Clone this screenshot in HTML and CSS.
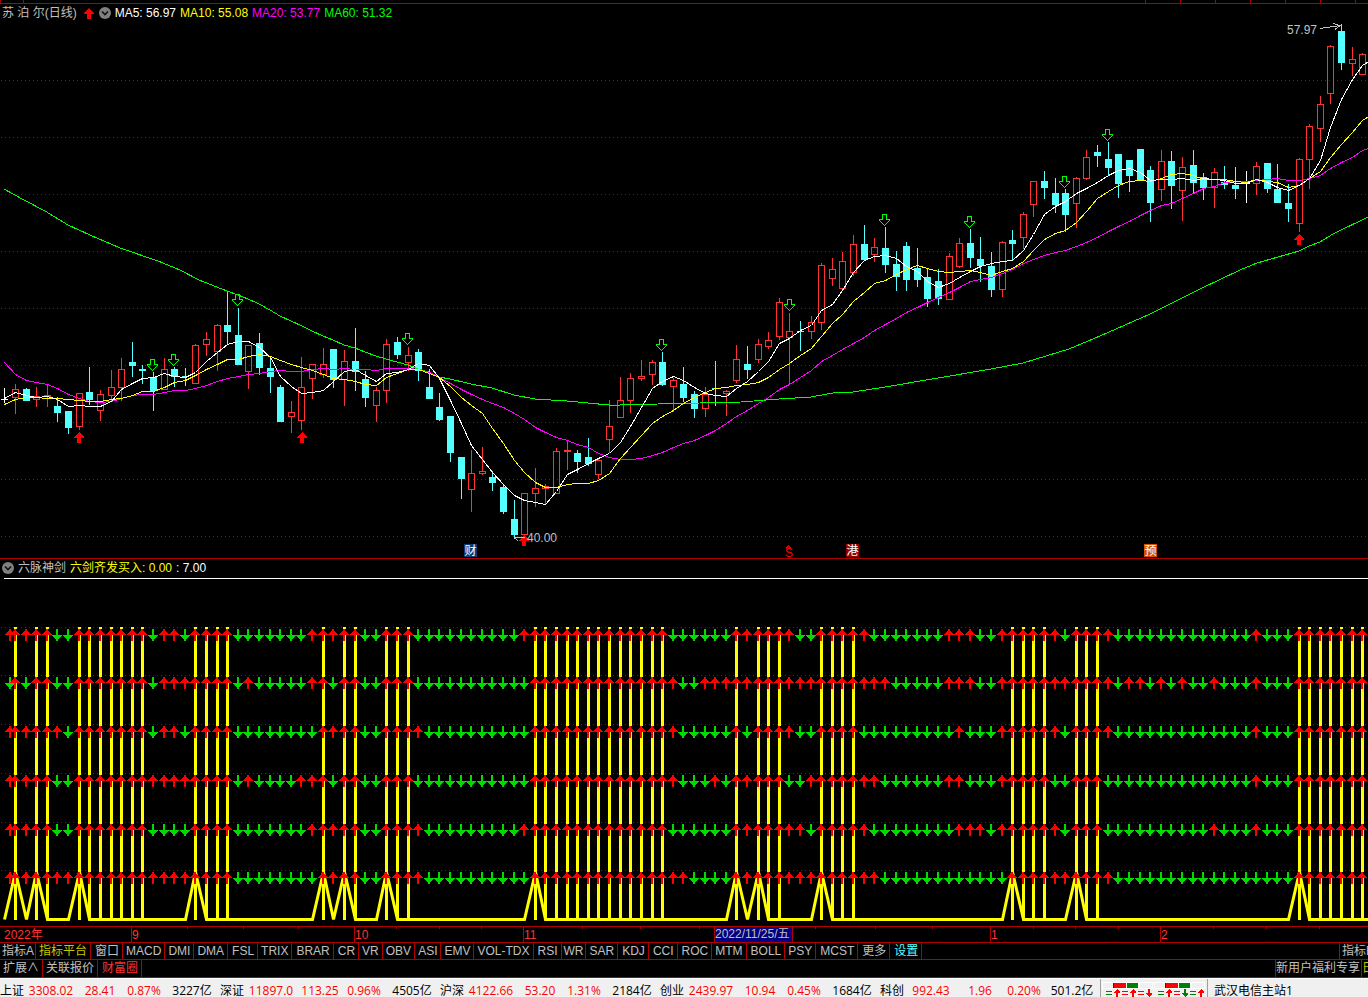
FILE: index.html
```html
<!DOCTYPE html>
<html lang="zh-CN">
<head>
<meta charset="utf-8">
<meta name="viewport" content="width=device-width, initial-scale=1">
<title>苏泊尔(日线)</title>
<link rel="stylesheet" href="styles.css">
</head>
<body>
<div class="terminal">
  <svg class="plot" id="strip" viewBox="0 0 1368 4" aria-hidden="true"></svg>

  <section class="panel">
    <header class="legend">
      <span class="name">苏 泊 尔(日线)</span>
      <svg class="trend" viewBox="0 0 10 11" width="10" height="11" aria-hidden="true"><path d="M5 0L10 5V6H7V11H3V6H0V5Z" fill="#f00"/></svg>
      <button class="fold" type="button" aria-label="展开主图"><svg viewBox="0 0 12 12" width="12" height="12"><circle cx="6" cy="6" r="6" fill="#808080"/><path d="M3 4.5L6 7.5L9 4.5" fill="none" stroke="#111" stroke-width="1.6"/></svg></button>
      <span class="white">MA5: 56.97</span>
      <span class="yellow">MA10: 55.08</span>
      <span class="magenta">MA20: 53.77</span>
      <span class="green">MA60: 51.32</span>
    </header>
    <svg class="plot" id="price" viewBox="0 22 1368 536" role="img" aria-label="日线K线图"></svg>
  </section>

  <section class="panel divided">
    <header class="legend">
      <button class="fold" type="button" aria-label="展开副图"><svg viewBox="0 0 12 12" width="12" height="12"><circle cx="6" cy="6" r="6" fill="#808080"/><path d="M3 4.5L6 7.5L9 4.5" fill="none" stroke="#111" stroke-width="1.6"/></svg></button>
      <span class="name">六脉神剑</span>
      <span class="yellow">六剑齐发买入: 0.00</span>
      <span class="white">: 7.00</span>
    </header>
    <svg class="plot" id="swords" viewBox="0 577 1368 349" role="img" aria-label="六脉神剑指标"></svg>
  </section>

  <svg class="plot" id="axis" viewBox="0 926 1368 16" role="img" aria-label="日期轴"></svg>

  <nav class="tabs" aria-label="指标">
    <button type="button" class="tight">指标A</button><button type="button" class="olive">指标平台</button><button type="button" class="roomy">窗口</button><button type="button">MACD</button><button type="button">DMI</button><button type="button">DMA</button><button type="button" class="roomy">FSL</button><button type="button">TRIX</button><button type="button" class="roomy">BRAR</button><button type="button" class="roomy">CR</button><button type="button">VR</button><button type="button">OBV</button><button type="button">ASI</button><button type="button">EMV</button><button type="button">VOL-TDX</button><button type="button" class="roomy">RSI</button><button type="button" class="tight">WR</button><button type="button" class="roomy">SAR</button><button type="button" class="roomy">KDJ</button><button type="button" class="roomy">CCI</button><button type="button" class="roomy">ROC</button><button type="button">MTM</button><button type="button" class="roomy">BOLL</button><button type="button">PSY</button><button type="button" class="roomy">MCST</button><button type="button" class="roomy">更多</button><button type="button" class="roomy aqua">设置</button>
    <div class="tail tail-indicator"><button type="button" class="tight">指标B</button></div>
  </nav>

  <nav class="tabs lower" aria-label="扩展">
    <button type="button">扩展∧</button><button type="button">关联报价</button><button type="button" class="roomy red">财富圈</button>
    <div class="tail tail-promo"><button type="button" class="snug">新用户福利专享</button><button type="button" class="snug olive">日</button></div>
  </nav>

  <footer class="status">
    <div class="quote"><b>上证</b><i>3308.02</i><i>28.41</i><i>0.87%</i><span>3227亿</span></div>
    <div class="quote"><b>深证</b><i>11897.0</i><i>113.25</i><i>0.96%</i><span>4505亿</span></div>
    <div class="quote"><b>沪深</b><i>4122.66</i><i>53.20</i><i>1.31%</i><span>2184亿</span></div>
    <div class="quote"><b>创业</b><i>2439.97</i><i>10.94</i><i>0.45%</i><span>1684亿</span></div>
    <div class="quote"><b>科创</b><i>992.43</i><i>1.96</i><i>0.20%</i><span>501.2亿</span></div>
    <div class="meters"><svg id="meters" viewBox="0 0 106 19" width="106" height="19" aria-hidden="true"></svg></div>
    <div class="host">武汉电信主站1</div>
  </footer>
</div>
<script src="chart.js"></script>
</body>
</html>
```
FILE: styles.css
```css
* { box-sizing: border-box; }
html, body { margin: 0; background: #000; }
body {
  overflow: hidden;
  font: 12px/16px "Liberation Sans", "Noto Sans CJK SC", sans-serif;
  color: #c0c0c0;
}
button { font: inherit; color: inherit; background: none; border: 0; padding: 0; margin: 0; cursor: pointer; }
.terminal { display: flex; flex-direction: column; min-height: 100vh; }
.panel { display: flex; flex-direction: column; }
.divided { border-top: 1px solid #b00000; }
.legend { display: flex; align-items: center; gap: 4px; height: 18px; padding-left: 2px; white-space: nowrap; }
.legend .trend { margin: 0 1px 0 3px; display: block; }
.legend .fold { display: block; width: 12px; height: 12px; }
.fold svg { display: block; }
.white { color: #fff; }
.yellow { color: #ff0; }
.magenta { color: #f0f; }
.green { color: #0f0; }
.plot { display: block; width: 100%; height: auto; overflow: visible; }
.plot text { font-family: "Liberation Sans", "Noto Sans CJK SC", sans-serif; font-size: 12px; }
.crisp { shape-rendering: crispEdges; }

.tabs { display: flex; height: 17px; border-top: 1px solid #b00000; overflow: hidden; white-space: nowrap; }
.tabs.lower { height: 19px; border-bottom: 1px solid #b00000; }
.tabs button { flex: none; height: 16px; line-height: 16px; padding: 0 3px; border-right: 1px solid #b00000; }
.tabs.lower button { height: 17px; line-height: 17px; }
.tabs .roomy { padding: 0 3px 0 4px; }
.tabs .tight { padding: 0 1px 0 2px; }
.tabs .snug { padding: 0 1px 0 0; }
.tabs .olive { color: #c8c800; }
.tabs .aqua { color: #54ffff; }
.tabs .red { color: #ff3232; }
.tail { display: flex; margin-left: auto; border-left: 1px solid #b00000; overflow: hidden; flex: none; }
.tail-indicator { width: 29px; }
.tail-promo { width: 93px; }

.status {
  display: flex; flex: 1; min-height: 19px; padding-top: 4px; overflow: hidden; white-space: nowrap;
  background: #f0f0f0; color: #000; border-top: 1px solid #fff;
  font-family: "Open Sans", "Noto Sans CJK SC", sans-serif; line-height: 15px;
}
.quote { flex: none; display: grid; grid-template-columns: 26px 50px 48px 40px 56px; text-align: center; }
.quote b { font-weight: normal; text-align: left; }
.quote i { font-style: normal; color: #f00; }
.meters { flex: none; margin: -4px 0; border-left: 1px solid #a0a0a0; border-right: 1px solid #a0a0a0; width: 108px; }
.meters svg { display: block; }
.host { padding-left: 6px; }
```
FILE: chart.js
```js
const RED = '#ff3232', CYAN = '#54ffff', LINE = '#b00000';
const px = i => Math.round(4.45 + 10.608 * i);
const rect = (x, y, w, h, f) => `<rect x="${x}" y="${y}" width="${w}" height="${h}" fill="${f}"/>`;
const dots = (y, c) => `<path d="M1 ${y}.5H1368" stroke="${c}" stroke-dasharray="1 3"/>`;

// colour, high, body top, body bottom, low
const candles = `w388 399 400 403,r384 389 398 414,c388 389 401 401,r387 396 400 407,r385 395 397 407,c397 406 413 422,c411 411 428 434,r393 393 427 430,c367 392 400 405,r390 394 411 421,
r370 387 396 401,r358 369 388 401,c342 362 366 377,c365 369 371 384,c372 377 391 411,r358 369 390 390,c367 369 377 387,c368 376 377 386,r344 345 384 384,r332 339 345 356,
r324 325 352 371,c291 325 332 344,c308 335 365 365,r345 345 372 389,c333 343 368 375,c356 368 377 393,c385 387 422 422,r401 412 417 433,r357 387 421 430,r364 364 379 399,
r348 364 375 378,c349 349 380 388,r350 361 380 406,c328 361 372 391,c371 379 398 407,r387 390 406 422,r339 344 391 403,c337 342 355 359,r347 355 363 371,c349 352 371 381,
c369 387 399 399,c393 407 420 421,c416 416 453 462,c457 457 479 499,r450 473 490 512,r447 471 474 475,c471 477 483 491,c484 487 512 514,c500 519 535 537,r493 493 535 535,
r468 488 494 507,r484 486 489 505,r448 451 494 494,r441 450 452 470,c450 453 462 473,c438 457 464 466,r458 460 475 479,r400 426 440 453,r377 400 418 418,r373 378 401 413,
r360 376 379 381,r360 362 375 385,c352 362 385 386,r378 380 387 412,c367 384 398 402,c391 394 409 418,r387 394 409 417,c361 388 389 406,r390 391 394 416,r345 359 381 383,
c346 364 370 379,r339 344 360 363,r332 340 347 349,r298 302 337 340,r313 331 338 384,c321 331 332 351,r316 322 332 339,r263 265 323 330,r258 269 279 286,r252 261 289 289,
r235 244 273 276,c225 244 260 261,r238 247 255 262,c227 248 265 273,c251 264 277 291,c242 246 280 291,c248 268 280 287,c269 277 299 307,c269 281 299 305,r253 256 300 300,
r238 243 267 268,c229 243 258 268,c237 259 266 282,c252 266 290 297,r241 242 290 297,c230 240 244 261,r212 214 238 249,r181 181 205 217,c171 181 188 199,c178 193 205 213,
c189 193 215 232,r177 178 204 228,r150 157 179 180,c145 152 156 167,c142 159 168 175,c154 154 184 198,c160 160 176 192,c149 149 180 180,c166 170 203 222,r150 161 190 201,
c151 161 186 209,r157 167 191 221,c150 165 183 193,c173 177 188 200,r168 172 188 208,c166 182 185 189,c167 185 189 199,w171 183 184 203,r162 166 184 195,c163 163 189 193,
c164 189 203 203,c184 203 209 222,r158 159 224 232,r124 126 160 189,r96 104 129 142,r45 46 94 104,c24 31 63 70,r47 59 64 76,r53 54 75 75`
  .replace(/\n/g, '').split(',').map(s => [s[0], ...s.slice(1).split(' ').map(Number)]);

const ma5 = [398,392,395,397,396,399,406,405,406,406,401,389,383,378,377,373,376,377,372,361,352,344,341,341,347,357,376,386,393,392,390,381,371,369,375,381,373,372,369,363,365,378,400,423,445,459,472,484,495,500,502,504,491,474,469,463,458,453,442,426,407,388,381,376,380,387,393,395,396,388,381,371,361,343,338,330,325,310,304,290,272,260,256,255,258,266,271,281,287,283,277,271,266,263,261,260,250,234,214,206,201,193,188,182,175,170,168,172,180,179,179,178,180,178,179,180,183,183,179,182,187,190,185,178,160,127,99,79,65,58];
const ma10 = [404,399,397,397,398,398,399,400,401,401,399,398,395,391,391,387,382,380,375,369,364,359,359,356,354,356,360,364,367,370,374,378,379,381,384,385,377,373,369,369,373,377,386,397,405,413,428,443,460,472,482,487,487,484,483,483,480,473,458,447,435,423,416,410,403,397,392,388,387,385,384,382,377,369,363,355,348,336,323,314,301,292,283,280,274,269,265,268,271,272,271,270,272,275,271,268,261,250,239,233,230,222,211,198,191,185,181,180,181,178,174,173,175,179,179,179,181,182,179,181,182,187,185,178,171,157,144,132,120,113];
const ma20 = [362,374,380,382,384,388,394,398,401,402,401,398,395,394,394,392,390,390,388,385,381,378,376,374,373,371,370,371,371,369,368,369,368,369,369,370,368,368,368,369,372,377,383,389,394,399,403,407,413,419,427,432,437,440,444,447,453,457,459,459,458,455,452,447,443,440,435,430,423,416,410,403,397,389,384,377,370,361,355,349,343,337,330,324,318,312,307,302,297,292,287,281,279,277,273,269,263,259,255,252,250,246,242,237,231,226,221,215,210,205,203,198,193,188,186,182,181,181,180,179,178,180,180,178,175,168,162,157,150,146];
const ma60 = '4,189 24,200 45,211 68,225 90,235 120,248 158,261 180,270 199,280 227,291 238,295 248,299 259,304 270,310 280,316 291,321 302,326 312,331 323,336 333,340 344,345 355,348 365,352 376,356 386,359 397,362 408,365 418,369 429,372 439,377 450,379 471,384 492,388 514,395 535,399 567,401 609,405 620,405 658,404 700,403 741,402 779,399 811,397 833,393 853,392 885,387 938,378 991,369 1023,363 1069,349 1100,336 1150,314 1200,289 1240,270 1257,263 1299,251 1309,246 1320,242 1333,234 1368,217';

const curve = (pts, c) => `<polyline points="${pts}" fill="none" stroke="${c}"/>`;
const series = v => v.map((y, i) => `${px(i) + .5},${y + .5}`).join(' ');
const sellMark = ([x, y]) => `<path d="M${x - 2.5} ${y + .5}h4v5h3v1l-5 5l-5 -5v-1h3v-5Z" fill="none" stroke="#0f0"/>`;
const buyMark = ([x, y]) => `<path d="M${x} ${y}l5 5v1h-3v5h-4v-5h-3v-1Z" fill="#f00"/>`;
const badge = (x, t, bg) => rect(x, 544, 13, 13, bg) + `<text x="${x + .5}" y="555" fill="#fff">${t}</text>`;

let g = '<g class="crisp">';
[80, 137, 194, 251, 308, 365, 422, 479, 536].forEach(y => g += dots(y, LINE));
candles.forEach(([k, hi, top, bot, lo], i) => {
  const x = px(i), h = bot - top;
  if (k === 'r') {
    g += rect(x, hi, 1, top - hi, RED) + rect(x, bot, 1, lo - bot, RED);
    g += `<rect x="${x - 2.5}" y="${top + .5}" width="6" height="${h - 1}" fill="none" stroke="${RED}"/>`;
  } else {
    const c = k === 'c' ? CYAN : '#fff';
    g += rect(x, hi, 1, lo - hi, c) + rect(x - 3, top, 7, h, c);
  }
});
g += curve(ma60, '#0f0') + curve(series(ma20), '#f0f') + curve(series(ma10), '#ff0') + curve(series(ma5), '#fff');
g += [[153, 359], [174, 354], [238, 294], [408, 333], [662, 339], [790, 299], [885, 214], [970, 216], [1065, 176], [1108, 129]].map(sellMark).join('');
g += [[79, 432], [302, 432], [524, 535], [1299, 234]].map(buyMark).join('');
g += '<path d="M1320 28.5L1340 25.5M1333 23.5L1340 25.5L1335 29.5M514 537.5H525M514 537.5L518 541" fill="none" stroke="#c0c0c0"/></g>';
g += '<text x="1287" y="34" fill="#c0c0c0">57.97</text><text x="527" y="542" fill="#c0c0c0">40.00</text>';
g += badge(464, '财', '#0a3a78') + badge(846, '港', '#900000') + badge(1144, '预', '#d05000');
g += '<text x="785" y="557" fill="#f00">S</text><path d="M786 548.5L788.5 546L791 548.5" fill="none" stroke="#f00" stroke-width="1.5"/>';
document.getElementById('price').innerHTML = g;

// bars falling on each of the six signal rows
const falls = [
  '5-6 14 17 22-28 34-35 39-48 63-68 75-76 82-88 92-93 100 105-117 119-121',
  '0 2 5-6 14 22 24-28 31 34-35 39-49 64-65 84-88 92-93 105 108 110 112-113 115-117 119-121',
  '6 14 17 22-29 34-35 40-49 64-68 70 75-76 81-89 91-93 100 105-117 119-121',
  '5-6 22 24-27 31 34-35 39-49 64-66 68 74-75 83-88 91-93 99-100 104-117 119-121',
  '5-6 14-17 22-28 34-35 40-48 63-68 76 82-89 93 100 104-113 115-117 119-121',
  '22-29 34-35 40-49 65-68 83-94 105-121'
];
const span = s => s.split(' ').flatMap(p => {
  const [a, b = a] = p.split('-').map(Number);
  return Array.from({ length: b - a + 1 }, (_, k) => a + k);
});
const hits = span('1 3-4 7-13 18-21 30 32-33 36-38 50-62 69 71-73 77-80 95-98 101-103 122-128');
const levels = [627, 675, 724, 773, 822, 870];

let s = '<g class="crisp"><path d="M4 578.5H1368" stroke="#fff"/>';
levels.forEach(y => s += dots(y, LINE));
hits.forEach(i => {
  s += rect(px(i) - 1, 627, 3, 293, '#ff0');
  levels.forEach(y => s += rect(px(i) - 1, y + 2, 3, 6, '#000'));
});
s += '</g><polyline fill="none" stroke="#ff0" stroke-width="3" points="';
for (let i = 0; i < 130; i++) s += `${px(i) + .5},${hits.includes(i) && !hits.includes(i - 1) ? 872 : 919.5} `;
s += '"/><g class="crisp">';
levels.forEach((y, r) => {
  const down = span(falls[r]);
  for (let i = 0; i < 129; i++) {
    const x = i ? px(i) : 10;
    s += down.includes(i)
      ? `<path d="M${x - 1} ${y + 2}h2v6h4v1h-1v1h-1v1h-1v1h-1v2h-2v-2h-1v-1h-1v-1h-1v-1h-1v-1h4Z" fill="#00dc00"/>`
      : `<path d="M${x - 1} ${y + 14}h2v-6h4v-1h-1v-1h-1v-1h-1v-1h-1v-2h-2v2h-1v1h-1v1h-1v1h-1v1h4Z" fill="#f00"/>`;
  }
});
document.getElementById('swords').innerHTML = s + '</g>';

let a = '<g class="crisp">' + rect(0, 926, 1368, 1, LINE) + rect(714, 927, 78, 15, '#000080');
[131, 354, 523, 714, 792, 990, 1160].forEach(x => a += rect(x, 926, 1, 16, LINE));
[187, 243, 298, 396, 439, 481, 582, 640, 699, 815, 875, 932, 1033, 1075, 1118, 1213, 1266, 1319].forEach(x => a += rect(x, 927, 1, 2, LINE));
a += '</g>';
[[4, '2022年'], [132, '9'], [355, '10'], [524, '11'], [991, '1'], [1161, '2']].forEach(([x, t]) => a += `<text x="${x}" y="939" fill="${RED}">${t}</text>`);
a += '<text x="715" y="938" fill="#c0c0c0">2022/11/25/五</text>';
document.getElementById('axis').innerHTML = a;

document.getElementById('strip').innerHTML = '<g class="crisp">' + rect(0, 3, 1368, 1, LINE)
  + [0, 23, 1145, 1180, 1215, 1250, 1285, 1320, 1355].map(x => rect(x, 0, 1, 4, LINE)).join('') + '</g>';

const glyph = (x, k, c) => k === '=' ? rect(x, 12, 6, 1, c) + rect(x, 15, 6, 1, c)
  : k === 'u' ? `<path d="M${x + 2} 18h2v-4h2v-1l-3 -3l-3 3v1h2Z" fill="${c}"/>`
  : `<path d="M${x + 2} 10h2v4h2v1l-3 3l-3 -3v-1h2Z" fill="${c}"/>`;
const meter = (x, marks) => {
  let m = rect(x, 3, 51, 7, '#fff') + rect(x + 1, 4, 10, 5, '#f0f0f0') + rect(x + 38, 4, 12, 5, '#f0f0f0')
    + rect(x + 11, 4, 1, 5, '#800000') + rect(x + 12, 4, 12, 5, '#f00') + rect(x + 25, 4, 11, 5, '#008000');
  marks.forEach((k, i) => m += glyph(x + 4 + i * 8, k[0], k[1] === 'g' ? '#008000' : '#f00'));
  return m;
};
document.getElementById('meters').innerHTML = '<g class="crisp">'
  + meter(1, ['=g', 'ur', '=r', 'ur', '=r', 'dr']) + meter(53, ['=g', 'ur', '=r', 'dg', '=g', 'ur']) + '</g>';
```
